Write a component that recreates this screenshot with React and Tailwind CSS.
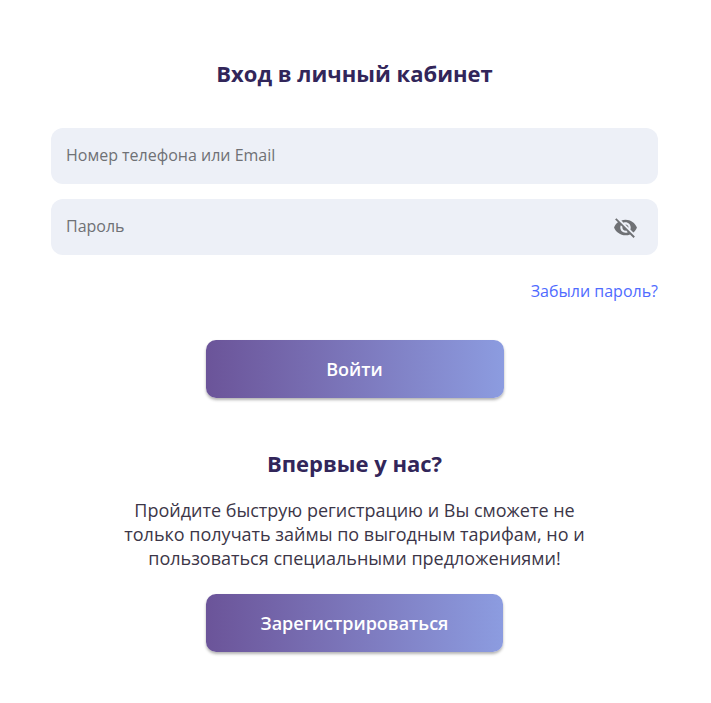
import React from 'react';

const EyeOffIcon = () => (
  <svg className="w-[25px] h-[25px] text-[#6f7175] fill-current" viewBox="0 0 24 24">
    <path d="M12 7c2.76 0 5 2.24 5 5 0 .65-.13 1.26-.36 1.83l2.92 2.92c1.51-1.26 2.7-2.89 3.43-4.75-1.73-4.39-6-7.5-11-7.5-1.4 0-2.74.25-3.98.7l2.16 2.16C10.74 7.13 11.35 7 12 7zM2 4.27l2.28 2.28.46.46C3.08 8.3 1.78 10.02 1 12c1.73 4.39 6 7.5 11 7.5 1.55 0 3.03-.3 4.38-.84l.42.42L19.73 22 21 20.73 3.27 3 2 4.27zM7.53 9.8l1.55 1.55c-.05.21-.08.43-.08.65 0 1.66 1.34 3 3 3 .22 0 .44-.03.65-.08l1.55 1.55c-.67.33-1.41.53-2.2.53-2.76 0-5-2.24-5-5 0-.79.2-1.53.53-2.2zm4.31-.78l3.15 3.15.02-.16c0-1.66-1.34-3-3-3l-.17.01z" />
  </svg>
);

const GradientButton = ({ children, width }) => (
  <button className={`${width} h-[58px] rounded-[10px] bg-gradient-to-r from-[#6b5499] to-[#8c9ce0] text-white text-[18px] font-semibold shadow-[0_2px_3px_rgba(0,0,0,0.3)]`}>
    {children}
  </button>
);

export default function App() {
  return (
    <div className="min-h-[703px] bg-white px-[51px] pr-[53px] pt-[58px] font-['Open_Sans',sans-serif]">
      {/* Login */}
      <h1 className="text-center text-[22px] leading-[30px] font-bold text-[#32265a]">Вход в личный кабинет</h1>

      <div className="mt-[40px] flex flex-col gap-[15px]">
        <div className="h-[56px] rounded-[12px] bg-[#edf0f7] px-[15px] pb-[2px] flex items-center text-[16px] text-[#6f7175]">
          Номер телефона или Email
        </div>
        <div className="h-[56px] rounded-[12px] bg-[#edf0f7] pl-[15px] pr-[20px] flex items-center justify-between text-[16px] text-[#6f7175]">
          <span className="mb-[2px]">Пароль</span>
          <EyeOffIcon />
        </div>
      </div>

      <div className="mt-[24px] text-right text-[16px] leading-[24px] text-[#4f6bff]">
        <a href="#">Забыли пароль?</a>
      </div>

      <div className="mt-[37px] flex justify-center">
        <GradientButton width="w-[298px]">Войти</GradientButton>
      </div>

      {/* Register */}
      <h2 className="mt-[50px] text-center text-[22px] leading-[30px] font-bold text-[#32265a]">Впервые у нас?</h2>

      <p className="mt-[20px] mx-auto w-[480px] text-center text-[18px] leading-[24px] text-[#3c3648]">
        Пройдите быструю регистрацию и Вы сможете не только получать займы по выгодным тарифам, но и пользоваться специальными предложениями!
      </p>

      <div className="mt-[24px] flex justify-center">
        <GradientButton width="w-[297px]">Зарегистрироваться</GradientButton>
      </div>
    </div>
  );
}
